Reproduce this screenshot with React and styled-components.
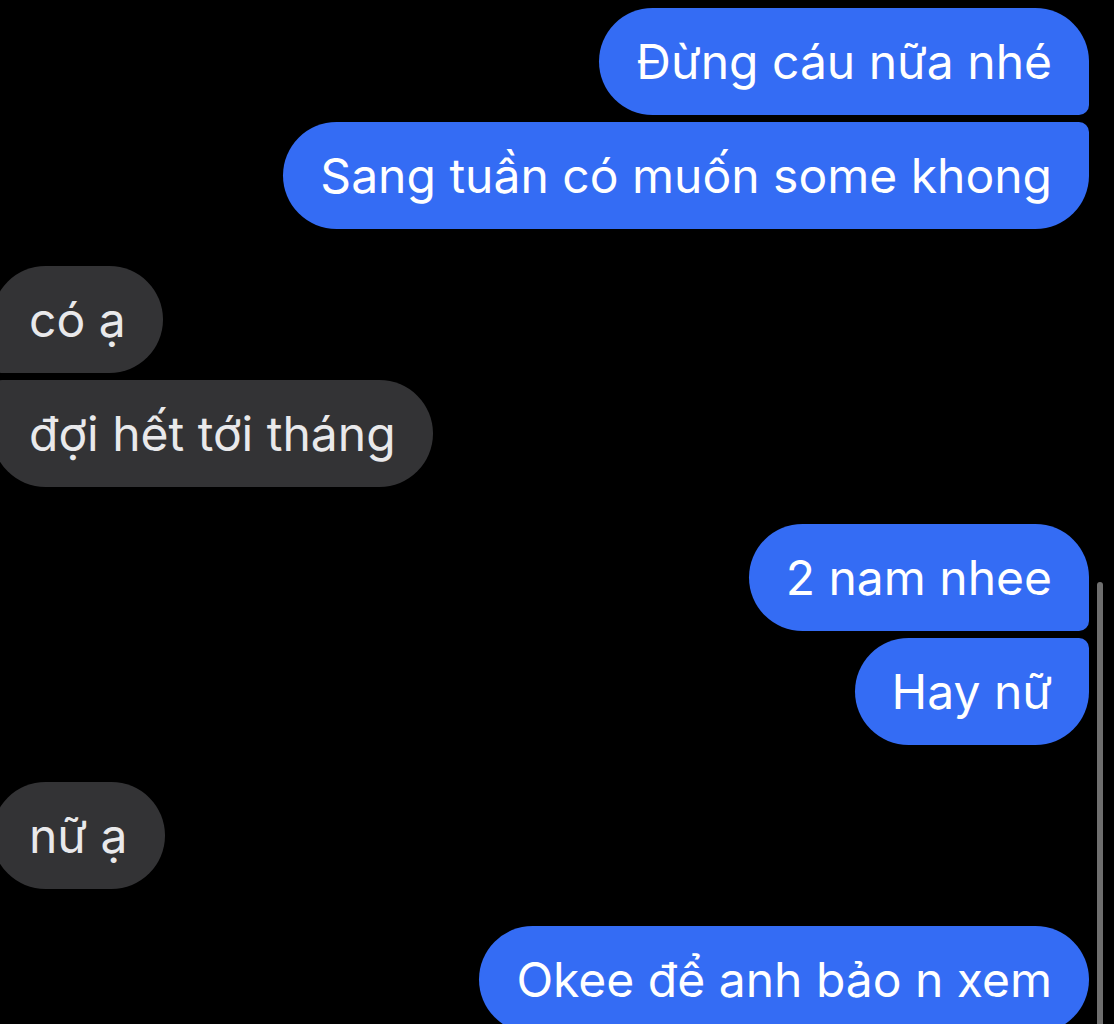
import styled, { createGlobalStyle } from "styled-components";

const GlobalStyle = createGlobalStyle`
  html, body {
    margin: 0;
    padding: 0;
    background: #000;
  }
  body {
    font-family: Inter, "Noto Sans", "Liberation Sans", sans-serif;
  }
`;

const Screen = styled.div`
  position: relative;
  width: 1114px;
  height: 1024px;
  overflow: hidden;
  background: #000;
`;

const Thread = styled.div`
  display: flex;
  flex-direction: column;
  padding: 8px 25px 0 0;
  gap: 37px;
`;

const Group = styled.div`
  display: flex;
  flex-direction: column;
  gap: 7px;
  align-items: ${(p) => (p.$mine ? "flex-end" : "flex-start")};
  margin-left: ${(p) => (p.$mine ? "0" : "-8px")};
`;

const big = "53.5px";
const small = "10px";

const Bubble = styled.div`
  box-sizing: border-box;
  height: 107px;
  padding: 0 37px;
  display: flex;
  align-items: center;
  font-size: 48px;
  letter-spacing: 0;
  white-space: nowrap;
  color: ${(p) => (p.$mine ? "#ffffff" : "#e9e9eb")};
  background: ${(p) => (p.$mine ? "#346cf4" : "#333335")};
  border-radius: ${(p) => {
    const first = p.$pos === "first" || p.$pos === "single";
    const last = p.$pos === "last" || p.$pos === "single";
    const top = first ? big : small;
    const bottom = last ? big : small;
    return p.$mine
      ? `${big} ${top} ${bottom} ${big}`
      : `${top} ${big} ${big} ${bottom}`;
  }};
`;

const Scrollbar = styled.div`
  position: absolute;
  left: 1097px;
  top: 582px;
  width: 6px;
  height: 460px;
  border-radius: 3px;
  background: #6f6f6f;
`;

const groups = [
  { mine: true, lines: ["Đừng cáu nữa nhé", "Sang tuần có muốn some khong"] },
  { mine: false, lines: ["có ạ", "đợi hết tới tháng"] },
  { mine: true, lines: ["2 nam nhee", "Hay nữ"] },
  { mine: false, lines: ["nữ ạ"] },
  { mine: true, lines: ["Okee để anh bảo n xem"] },
];

const position = (i, n) => {
  if (n === 1) return "single";
  if (i === 0) return "first";
  if (i === n - 1) return "last";
  return "middle";
};

const App = () => {
  return (
    <Screen>
      <GlobalStyle />
      <Thread>
        {groups.map((g, gi) => (
          <Group key={gi} $mine={g.mine}>
            {g.lines.map((text, i) => (
              <Bubble key={i} $mine={g.mine} $pos={position(i, g.lines.length)}>
                {text}
              </Bubble>
            ))}
          </Group>
        ))}
      </Thread>
      <Scrollbar />
    </Screen>
  );
};

export default App;
